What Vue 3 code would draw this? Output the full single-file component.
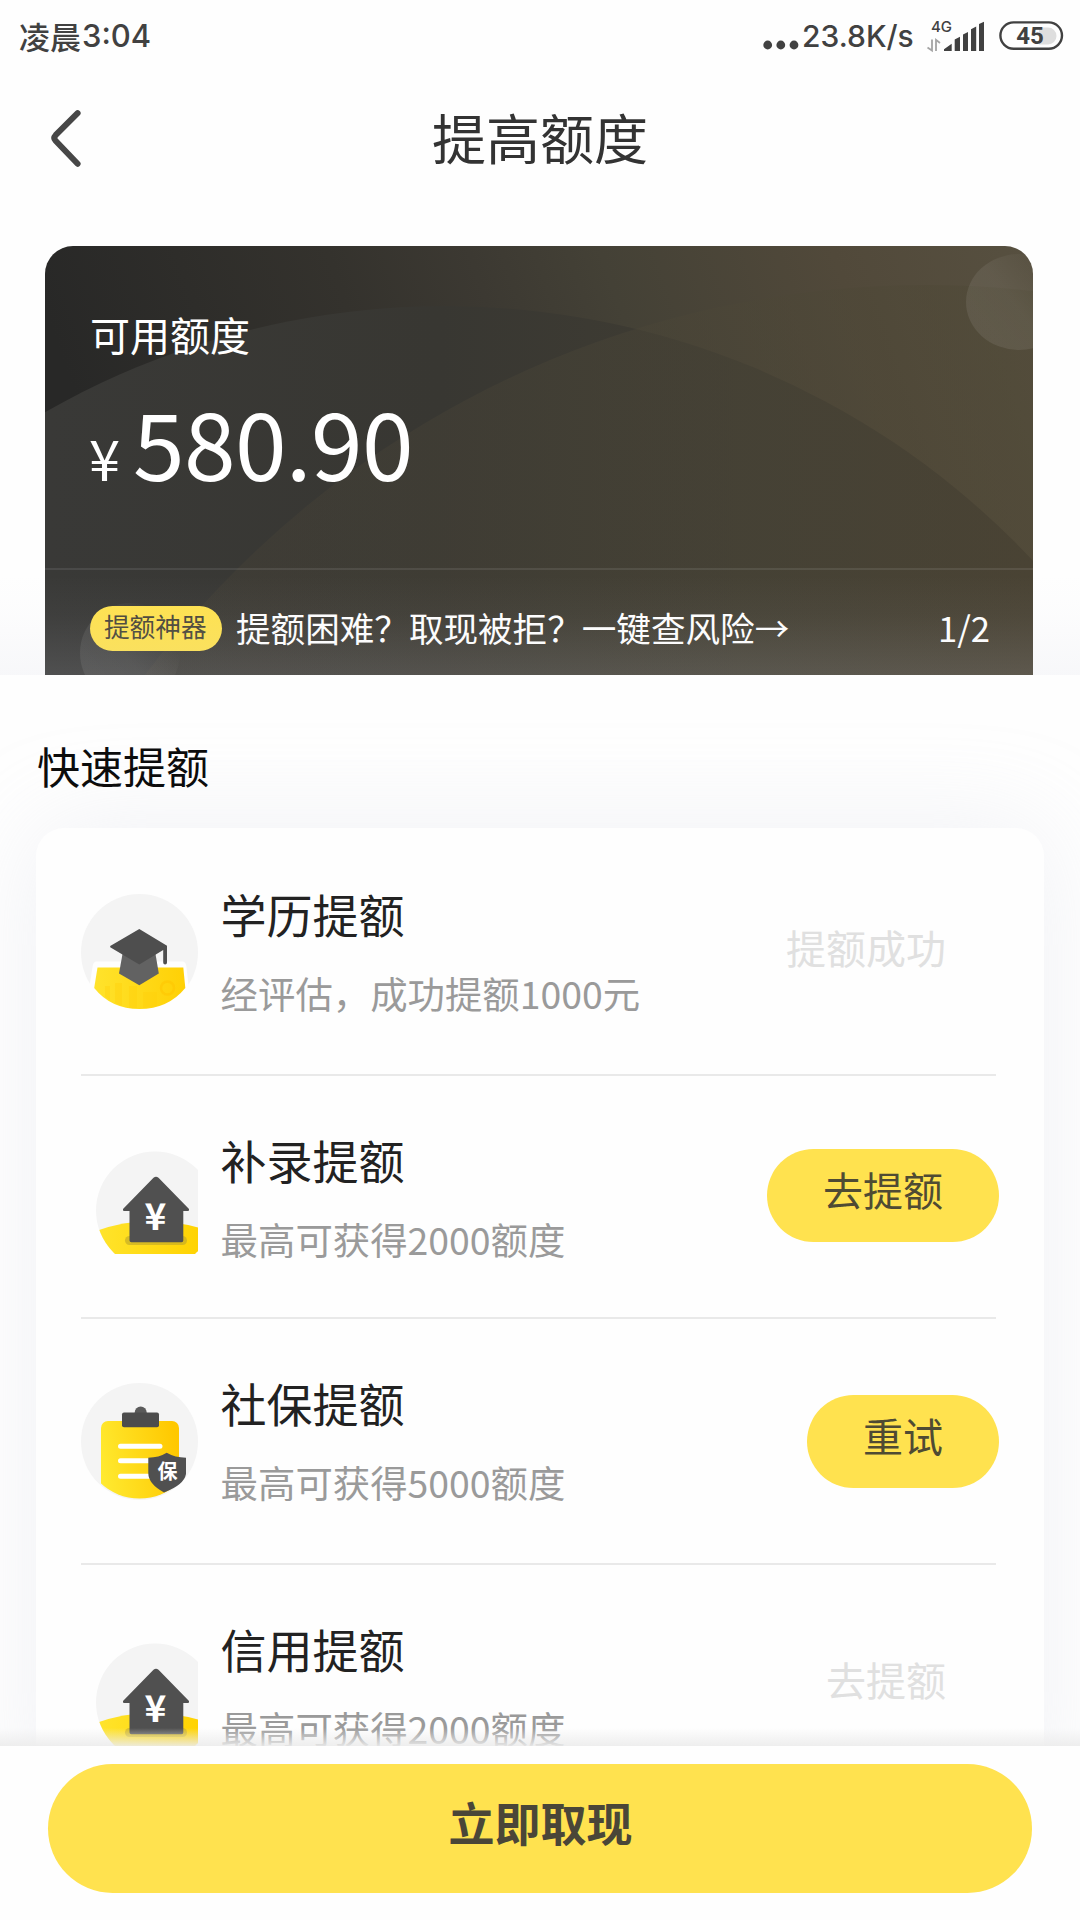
<script setup>
const rows = [
  { icon: 'school', title: '学历提额', desc: '经评估，成功提额1000元', action: '提额成功', active: false },
  { icon: 'house', title: '补录提额', desc: '最高可获得2000额度', action: '去提额', active: true },
  { icon: 'board', title: '社保提额', desc: '最高可获得5000额度', action: '重试', active: true },
  { icon: 'house', title: '信用提额', desc: '最高可获得2000额度', action: '去提额', active: false },
]
</script>

<template>
  <div class="page">
    <header class="status">
      <div class="time"><span class="cjk">凌晨</span><span>3:04</span></div>
      <div class="status-right">
        <svg class="dots" width="36" height="10" viewBox="0 0 36 10">
          <circle cx="4.7" cy="5" r="4.4" /><circle cx="17.8" cy="5" r="4.4" /><circle cx="31" cy="5" r="4.4" />
        </svg>
        <span class="speed">23.8K/s</span>
        <svg class="signal" width="60" height="38" viewBox="925 14 60 38">
          <text x="930" y="31" class="net">4G</text>
          <g class="arrows">
            <path d="M931 38.5V49.5L926.5 46.5" /><path d="M935 50V38.8L939 42" />
          </g>
          <path d="M943 50V48.3L950.7 42.7V50ZM953.7 50V38.6L959 35.8V50ZM962 50V33.4L967 31V50ZM970 50V28.2L975.2 25.6V50ZM978 50V23L983 20.8V50Z" />
        </svg>
        <svg class="battery" width="65" height="30" viewBox="0 0 65 30">
          <path d="M40 6.5h9a8.5 8.5 0 0 1 0 17h-9z" fill="#dedede" />
          <rect x="1.4" y="1.4" width="61.6" height="26.4" rx="13.2" fill="none" stroke="#414141" stroke-width="2.4" />
          <text x="31" y="23.2" text-anchor="middle">45</text>
        </svg>
      </div>
    </header>

    <nav class="nav">
      <svg class="back" width="40" height="60" viewBox="48 108 40 60">
        <path d="M77.6 113.2L55.6 135.2Q53 138 55.6 140.8L77.6 163.8" />
      </svg>
      <h1>提高额度</h1>
    </nav>

    <div class="hero-wrap">
      <section class="hero">
        <svg class="art" width="988" height="429" viewBox="45 246 988 429">
          <defs>
            <linearGradient id="bg" x1="0" y1="0.15" x2="1" y2="0">
              <stop offset="0" stop-color="#282827" /><stop offset=".3" stop-color="#34322d" />
              <stop offset=".44" stop-color="#3c3932" />
              <stop offset=".57" stop-color="#444136" /><stop offset=".8" stop-color="#51493a" /><stop offset="1" stop-color="#575040" />
            </linearGradient>
            <linearGradient id="ca" gradientUnits="userSpaceOnUse" x1="45" y1="0" x2="1033" y2="0">
              <stop offset="0" stop-color="#393937" /><stop offset=".4" stop-color="#383732" />
              <stop offset=".7" stop-color="#403d33" /><stop offset="1" stop-color="#443d32" />
            </linearGradient>
            <linearGradient id="cb" gradientUnits="userSpaceOnUse" x1="170" y1="0" x2="1033" y2="0">
              <stop offset="0" stop-color="#4b4538" stop-opacity=".28" /><stop offset=".5" stop-color="#4b4638" stop-opacity=".4" />
              <stop offset="1" stop-color="#4f4936" stop-opacity=".5" />
            </linearGradient>
            <linearGradient id="cc" x1="0.1" y1="0.6" x2=".8" y2="0.1">
              <stop offset="0" stop-color="#fff" stop-opacity=".08" /><stop offset=".4" stop-color="#fff" stop-opacity=".07" /><stop offset="1" stop-color="#fff" stop-opacity="0" />
            </linearGradient>
          </defs>
          <rect x="45" y="246" width="988" height="429" fill="url(#bg)" />
          <circle cx="445" cy="1112" r="806" fill="url(#ca)" />
          <circle cx="925" cy="1260" r="975" fill="url(#cb)" />
          <ellipse cx="1019" cy="302" rx="53" ry="48" fill="url(#cc)" />
          <circle cx="130" cy="653" r="50" fill="url(#cc)" />
        </svg>
        <div class="quota">
          <p class="label">可用额度</p>
          <p class="amount"><span class="yen">¥</span><span class="num">580.90</span></p>
        </div>
        <div class="tip">
          <span class="badge">提额神器</span>
          <span class="tip-text">提额困难？取现被拒？一键查风险→</span>
          <span class="count">1/2</span>
        </div>
      </section>
    </div>

    <main class="content">
      <h2>快速提额</h2>
      <ul class="card">
        <li v-for="row in rows" :key="row.title" class="row">
          <svg v-if="row.icon === 'school'" class="icon" viewBox="0 0 117 117">
            <defs>
              <linearGradient id="ye" x1="0" x2="1"><stop offset="0" stop-color="#ffe32c" /><stop offset="1" stop-color="#ffd005" /></linearGradient>
            </defs>
            <circle cx="58.5" cy="58.5" r="58.5" fill="#f4f4f4" />
            <path d="M16 67.5H101Q105 67.5 105.3 72L108 95L98 117H18L8 95L11.7 72Q12 67.5 16 67.5Z" fill="#fefefe" />
            <path d="M16.5 73.5H102.3L104.3 94Q87 115 58.5 115Q30 115 13.2 94Z" fill="url(#ye)" />
            <path d="M24 92h5v14l-5-3zM34 89h7v23l-7-3zM48 92h8v22h-8zM62 98h14v14l-14 2z" fill="#ffcf0a" opacity=".35" />
            <circle cx="86.5" cy="94" r="6.5" fill="none" stroke="#ffc400" stroke-width="2.5" opacity=".5" />
            <path d="M41.5 60L38 79.5L58.3 91.3L77.8 79.5L74.5 60Z" fill="#626262" />
            <path d="M58.3 35L86 51.8V68.5a1.9 1.9 0 0 1-3.8 0V56L58.3 70.5L29.2 53.2V52Z" fill="#4e4e4e" />
          </svg>
          <svg v-else-if="row.icon === 'house'" class="icon" viewBox="0 0 117 117">
            <defs>
              <clipPath id="hc"><circle cx="74" cy="73.5" r="59" /></clipPath>
              <linearGradient id="yh" x1="0" x2="1"><stop offset="0" stop-color="#ffe52e" /><stop offset="1" stop-color="#ffd200" /></linearGradient>
            </defs>
            <circle cx="74" cy="73.5" r="59" fill="#f4f4f4" />
            <g clip-path="url(#hc)">
              <path d="M10 96Q40 84 70 84Q96 84 122 92V120H10Z" fill="url(#yh)" />
              <rect x="44" y="99" width="62" height="9" rx="4.5" fill="#bca52a" opacity=".6" />
            </g>
            <path d="M72.5 40.8Q75 38.5 77.5 40.8L108 72Q108.500 74 107 74H102.300V103.500Q102.300 105.300 100.500 105.300H50.500Q48.500 105.300 48.500 103.500V74H43Q41.500 74 42 72Z" fill="#505050" />
            <text x="74.3" y="93" text-anchor="middle" class="icon-yen">¥</text>
          </svg>
          <svg v-else class="icon" viewBox="0 0 117 117">
            <defs>
              <clipPath id="bc"><circle cx="58.5" cy="58.5" r="57" /></clipPath>
              <linearGradient id="yb" x1="0" y1="0.6" x2="1" y2="0.4"><stop offset="0" stop-color="#ffea30" /><stop offset="1" stop-color="#ffc800" /></linearGradient>
            </defs>
            <circle cx="58.5" cy="58.5" r="58.5" fill="#f4f4f4" />
            <rect x="20" y="38" width="78" height="90" rx="7" fill="url(#yb)" clip-path="url(#bc)" />
            <circle cx="59.7" cy="29.5" r="6" fill="#5a5a5a" />
            <rect x="41" y="29.6" width="37" height="14.6" rx="2" fill="#4c4c4c" />
            <path d="M39.5 63.3H79M39.5 77.7H70M39.5 93.3H70" stroke="#fff" stroke-width="5" stroke-linecap="round" />
            <path d="M85.7 69.7Q94 74.5 105 74.7V91Q103 102 83 109.4Q67.3 101 67.3 90V74.7Q78 74.5 85.7 69.7Z" fill="#505050" />
            <text x="86.5" y="95.6" text-anchor="middle" class="icon-bao">保</text>
          </svg>
          <div class="info">
            <h3>{{ row.title }}</h3>
            <p>{{ row.desc }}</p>
          </div>
          <button v-if="row.active" class="go">{{ row.action }}</button>
          <span v-else class="state">{{ row.action }}</span>
        </li>
      </ul>
    </main>

    <footer class="bottom">
      <button class="withdraw">立即取现</button>
    </footer>
  </div>
</template>

<style>
body { margin: 0; background: #fefefe; }
</style>

<style scoped>
.page {
  width: 1080px; height: 1920px; overflow: hidden; background: #fefefe;
  display: flex; flex-direction: column;
  font-family: "Noto Sans CJK SC", sans-serif; color: #222;
}
h1, h2, h3, p, ul { margin: 0; padding: 0; font-weight: 400; }
button { border: 0; margin: 0; font-family: inherit; box-sizing: border-box; }
svg { display: block; flex: none; }

.status {
  height: 72px; flex: none; box-sizing: border-box; padding: 0 16px 0 19px;
  display: flex; justify-content: space-between; align-items: center;
  font-family: Inter, "Noto Sans CJK SC", sans-serif; font-weight: 500; color: #414141; fill: #414141;
}
.time { display: flex; align-items: center; font-size: 31px; line-height: 40px; }
.time .cjk { font-family: "Noto Sans CJK SC", sans-serif; font-size: 31px; margin-right: 1px; }
.status-right { display: flex; align-items: center; }
.dots { margin: 18px 3px 0 0; }
.speed { font-size: 30px; line-height: 40px; width: 114px; white-space: nowrap; }
.signal { margin: -4px 0 0 10px; }
.net { font-size: 15px; font-weight: 500; }
.arrows { fill: none; stroke: #a5a5a5; stroke-width: 1.8; }
.battery { margin-left: 13px; }
.battery text { font: 700 24px Roboto, sans-serif; }

.nav { height: 126px; flex: none; display: grid; grid-template-columns: 88px 1fr 88px; align-items: center; }
.back { justify-self: end; margin-top: 6px; fill: none; stroke: #474747; stroke-width: 6; stroke-linecap: round; }
.nav h1 { padding-top: 3px; text-align: center; font-size: 54px; line-height: 78px; color: #333; }

.hero-wrap { position: relative; flex: none; height: 429px; padding: 48px 47px 0 45px; }
.hero-wrap::after {
  content: ""; position: absolute; left: 0; right: 0; bottom: 0; height: 100px;
  background: linear-gradient(rgba(208, 210, 224, 0), rgba(208, 210, 224, .04) 40%, rgba(208, 210, 224, .15));
}
.hero { position: relative; height: 429px; overflow: hidden; border-radius: 28px 28px 0 0; color: #fff; }
.art { position: absolute; left: 0; top: 0; }
.quota { position: relative; height: 324px; box-sizing: border-box; padding: 59px 45px 0; border-bottom: 2px solid rgba(255, 255, 255, .09); }
.label { font-size: 40px; line-height: 58px; }
.amount { margin-top: 11px; display: flex; align-items: baseline; font-size: 93px; line-height: 134px; }
.num { letter-spacing: -.7px; }
.yen { font-size: 56px; margin: 0 13px 0 -1px; }
.tip { position: relative; height: 116px; display: flex; align-items: center; padding: 0 43px 0 45px; }
.badge {
  width: 132px; height: 45px; border-radius: 23px; box-sizing: border-box; padding: 0 1.5px 6px 0;
  background: #ffe24f; color: #4a4638; font-size: 25.7px; line-height: 39px; text-align: center;
}
.tip-text { margin: -3px 0 0 14px; font-size: 34.6px; line-height: 50px; white-space: nowrap; }
.count { margin: -3px 0 0 auto; font-size: 34.7px; line-height: 50px; }

.content { flex: 1; min-height: 0; overflow: hidden; }
.content h2 { padding: 59px 0 31px 37px; font-size: 43px; line-height: 63px; color: #0c0c0c; }
.card { list-style: none; margin: 0 36px; background: #fefefe; border-radius: 28px; box-shadow: 0 0 100px rgba(204, 207, 224, .28); }
.row { display: flex; align-items: flex-start; height: 245px; box-sizing: border-box; margin: 0 48px 0 45px; border-bottom: 2px solid #e9e9e9; }
.row:nth-child(1) { height: 248px; padding-top: 2px; }
.row:nth-child(2) { height: 243px; }
.row:nth-child(3) { height: 246px; }
.icon { width: 117px; height: 117px; margin-top: 64px; }
.row:nth-child(2) .icon { margin-top: 61px; }
.icon-yen { font-size: 37px; font-weight: 700; fill: #fff; }
.icon-bao { font-size: 20px; font-weight: 700; fill: #fff; }
.info { flex: 1; margin: 50px 0 0 22.6px; }
.info h3 { font-size: 46px; line-height: 66px; color: #222; }
.info p { margin-top: 20px; font-size: 37.4px; line-height: 54px; color: #9a9a9a; white-space: nowrap; }
.go {
  height: 93px; margin: 73px -3px 0 0; padding: 0 56px 12px; border-radius: 46.5px;
  background: #ffe24f; color: #4f4b33; font-size: 40px; line-height: 81px;
}
.row:nth-child(3) .go { margin-top: 76px; }
.state { margin: 88px 50px 0 0; font-size: 40px; line-height: 58px; color: #e0e0e0; }
.row:nth-child(4) .state { margin-top: 85px; }

.bottom { position: relative; flex: none; height: 174px; box-sizing: border-box; padding: 18px 48px 0; background: #fefefe; }
.bottom::before {
  content: ""; position: absolute; left: 0; right: 0; top: -18px; height: 18px;
  background: linear-gradient(rgba(236, 236, 236, 0), rgba(236, 236, 236, .9));
}
.withdraw {
  display: block; width: 100%; height: 129px; padding: 0 0 14px 1px; border-radius: 64.5px;
  background: #ffe24f; color: #4a4638; font-size: 46px; line-height: 115px; font-weight: 700;
}
</style>
